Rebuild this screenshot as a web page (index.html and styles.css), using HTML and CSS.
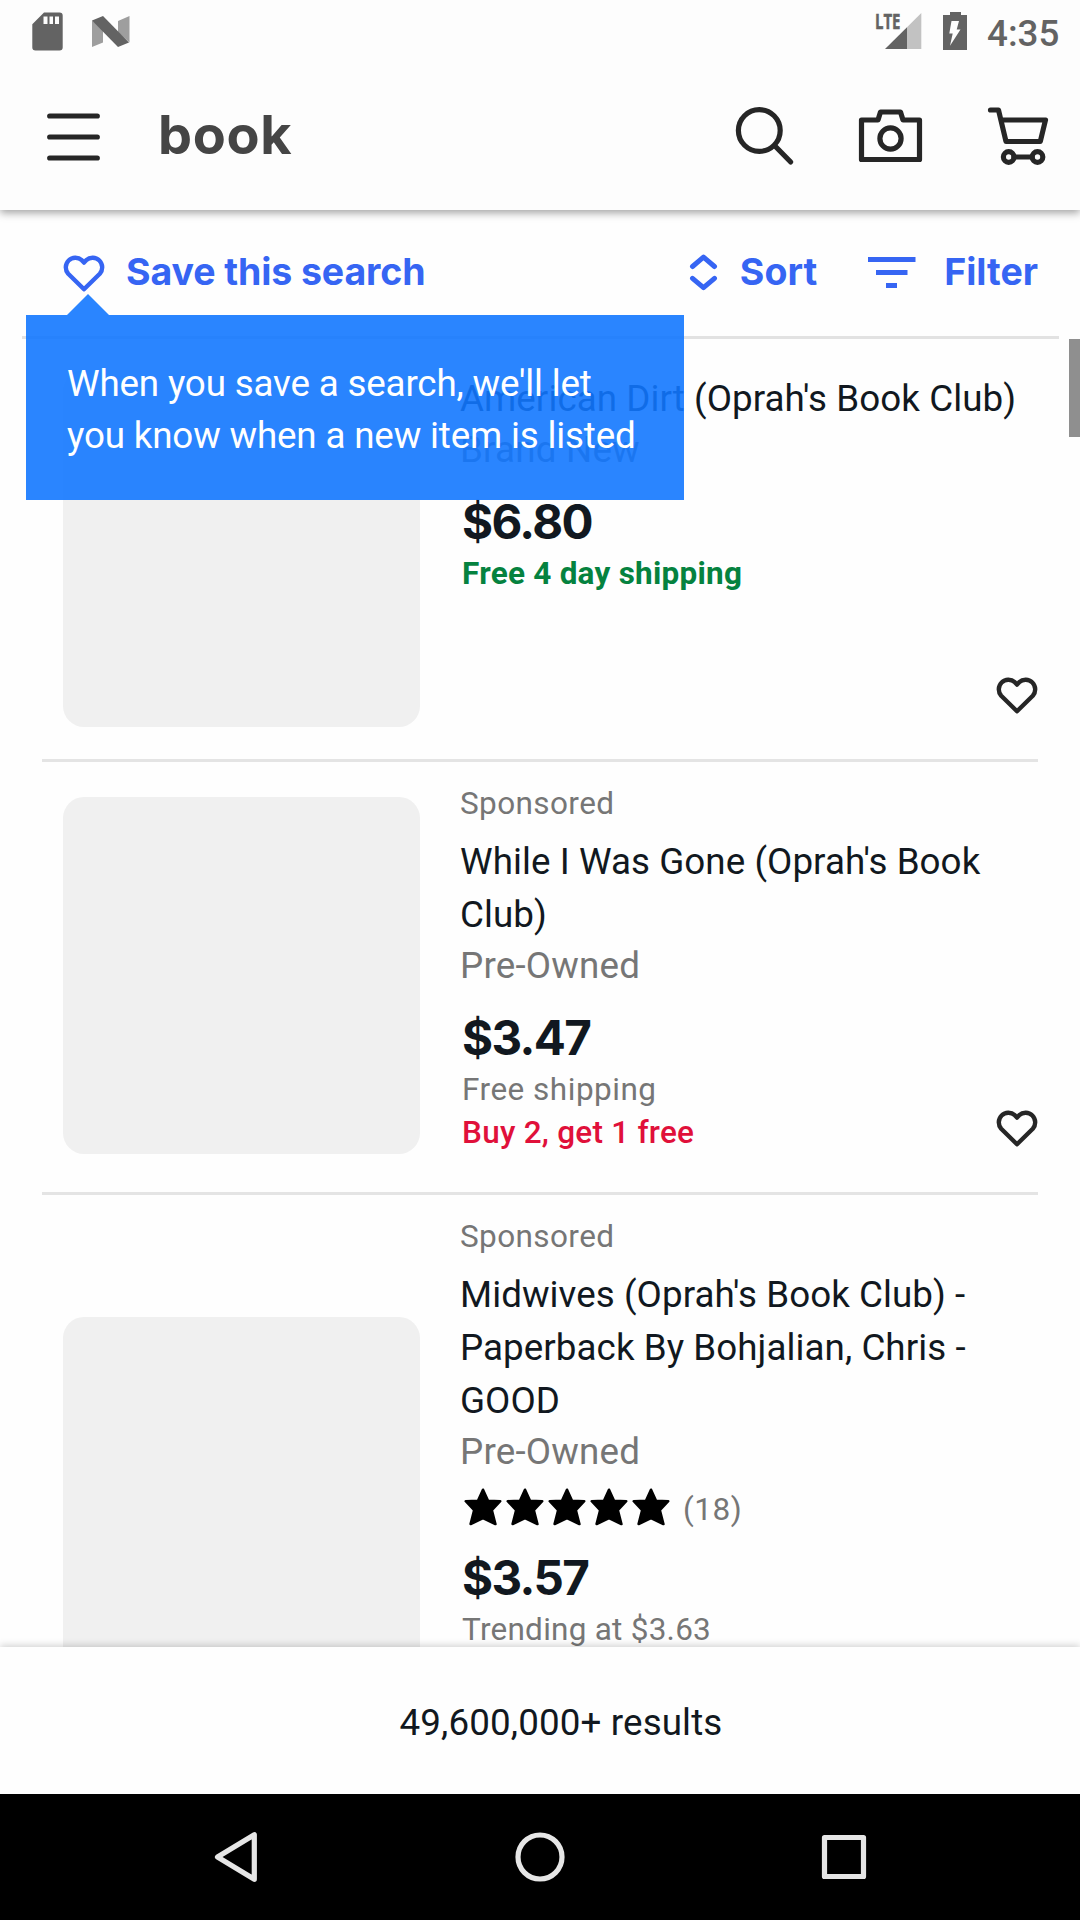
FILE: index.html
```
<!DOCTYPE html>
<html lang="en">
<head>
<meta charset="utf-8">
<title>book</title>
<link rel="stylesheet" href="styles.css">
</head>
<body>
<svg class="defs" aria-hidden="true">
  <symbol id="heart" viewBox="0 0 42 37"><path d="M21 34.300L5.200 18.700A9.600 9.600 0 0 1 18.800 5.200L21 7.600L23.200 5.200A9.600 9.600 0 0 1 36.800 18.700Z" fill="none" stroke="currentColor" stroke-width="4.400" stroke-linejoin="round"/></symbol>
  <symbol id="star" viewBox="0 0 38 38"><path d="M19 1.800L24 12.700L36.200 13.200L27.800 22.200L31.400 36L19 30L6.600 36L10.200 22.200L1.800 13.200L14 12.700Z" fill="#000" stroke="#000" stroke-width="2.600" stroke-linejoin="round"/></symbol>
</svg>
<div class="screen">
  <div class="status">
    <svg width="40" height="63" viewBox="28 0 40 63"><path fill="#636363" fill-rule="evenodd" d="M44 12.500H59.500Q62.700 12.500 62.700 15.500V47.500Q62.700 50.500 59.500 50.500H35.500Q32.300 50.500 32.300 47.500V24.300ZM43.500 16.500V24H47.500V16.500ZM49.500 16.500V24H53V16.500ZM55 16.500V24H59V16.500Z"/></svg>
    <svg class="nougat" width="46" height="63" viewBox="88 0 46 63"><path fill="#9e9e9e" d="M92 20.500L103 28V42.500L92 47ZM118 21L129.500 16V42.500L118 32Z"/><path fill="#636363" d="M92 20.500L103 16L129 42.500L118 47Z"/></svg>
    <span class="spacer"></span>
    <svg width="53" height="63" viewBox="872 0 53 63"><path fill="#c2c2c2" d="M921.300 13V49H907V27.300Z"/><path fill="#636363" d="M907 27.300V49H885Z"/><text x="875" y="28.800" class="lte" textLength="25.500" lengthAdjust="spacingAndGlyphs">LTE</text></svg>
    <svg class="battery" width="30" height="63" viewBox="940 0 30 63"><path fill="#636363" d="M950 12H961V15H967V50H943V15H950Z"/><path fill="#fdfdfd" d="M951.500 21H959L956.700 29.500H960.500L950 45.800L952.700 33.500H949.300Z"/></svg>
    <span class="time">4:35</span>
  </div>
  <header class="appbar">
    <svg width="60" height="100" viewBox="44 86.500 60 100"><path class="line" d="M49.700 115.500H97.300M49.700 136.500H97.300M49.700 157.500H97.300"/></svg>
    <h1 class="query">book</h1>
    <svg width="70" height="100" viewBox="730 86.500 70 100"><g class="line"><circle cx="759.300" cy="130" r="20.900"/><path d="M775 145.500L790.700 161.500"/></g></svg>
    <svg class="camera" width="72" height="100" viewBox="855 86.500 72 100"><g class="line"><path d="M861.500 119.500H878L880.500 111.500H900.500L903 119.500H919.500V159H861.500Z"/><circle cx="890.500" cy="138" r="10.600"/></g></svg>
    <svg class="cart" width="66" height="100" viewBox="985 86.500 66 100"><g class="line"><path d="M990.500 109.500H998.500L1006 141H1040.300L1045.500 119.500H1001"/><circle cx="1008.700" cy="156.500" r="5.300"/><circle cx="1037.500" cy="156.500" r="5.300"/><path d="M1014 156.500H1032"/></g></svg>
  </header>
  <div class="tools">
    <svg class="heart"><use href="#heart"/></svg>
    <span class="save">Save this search</span>
    <span class="spacer"></span>
    <svg width="32" height="60" viewBox="688 243 32 60"><path class="chev" d="M692.500 266.500L703.500 257.200L714.500 266.500M692.500 278.300L703.500 287.600L714.500 278.300"/></svg>
    <span class="sort">Sort</span>
    <svg class="bars" width="52" height="60" viewBox="866 243 52 60"><path fill="#3665f3" d="M868 257H915.500V262H868ZM876 270H907.500V275H876ZM886 283H897V288H886Z"/></svg>
    <span class="filter">Filter</span>
    <div class="tip">When you save a search, we'll let<br>you know when a new item is listed</div>
  </div>
  <main class="results">
    <article class="card first">
      <div class="photo"></div>
      <div class="info">
        <h2>American Dirt (Oprah's Book Club)</h2>
        <p class="condition">Brand New</p>
        <p class="price">$6.80</p>
        <p class="meta fast">Free 4 day shipping</p>
      </div>
      <svg class="heart"><use href="#heart"/></svg>
    </article>
    <article class="card second">
      <div class="photo"></div>
      <div class="info">
        <p class="sponsored">Sponsored</p>
        <h2>While I Was Gone (Oprah's Book<br>Club)</h2>
        <p class="condition">Pre-Owned</p>
        <p class="price">$3.47</p>
        <p class="meta ship">Free shipping</p>
        <p class="meta promo">Buy 2, get 1 free</p>
      </div>
      <svg class="heart"><use href="#heart"/></svg>
    </article>
    <article class="card third">
      <div class="photo"></div>
      <div class="info">
        <p class="sponsored">Sponsored</p>
        <h2>Midwives (Oprah's Book Club) -<br>Paperback By Bohjalian, Chris -<br>GOOD</h2>
        <p class="condition">Pre-Owned</p>
        <div class="rating"><svg><use href="#star"/></svg><svg><use href="#star"/></svg><svg><use href="#star"/></svg><svg><use href="#star"/></svg><svg><use href="#star"/></svg><span>(18)</span></div>
        <p class="price">$3.57</p>
        <p class="meta">Trending at $3.63</p>
      </div>
    </article>
    <div class="thumb"></div>
  </main>
  <footer class="count">49,600,000+ results</footer>
  <nav class="nav">
    <svg width="60" height="60" viewBox="206 1827 60 60"><path d="M217.500 1857L254.300 1834.700V1879.300Z"/></svg>
    <svg width="60" height="60" viewBox="510 1827 60 60"><circle cx="540" cy="1857" r="22"/></svg>
    <svg width="60" height="60" viewBox="814 1827 60 60"><rect x="824.500" y="1837.500" width="39" height="39"/></svg>
  </nav>
</div>
</body>
</html>
```
FILE: styles.css
```
* { box-sizing: border-box; margin: 0; padding: 0; }
body { background: #fefefe; font-family: Roboto, sans-serif; color: #111820; }
svg { display: block; flex: none; }
.defs { position: absolute; width: 0; height: 0; }
.screen { width: 1080px; height: 1920px; display: flex; flex-direction: column; overflow: hidden; }
.spacer { flex: 1; }

.status { flex: none; height: 63px; padding: 0 21px 0 28px; display: flex; align-items: center; position: relative; z-index: 2; background: #fdfdfd; }
.nougat { margin-left: 20px; }
.battery { margin-left: 15px; }
.lte { font: 700 21px "Open Sans", sans-serif; fill: #636363; stroke: #636363; stroke-width: .5px; }
.time { margin: 3px 0 0 17px; width: 72px; font-size: 36.75px; font-weight: 500; color: #636363; }

.appbar { flex: none; height: 147px; padding: 0 29px 0 44px; display: flex; align-items: center; background: #fdfdfd; box-shadow: 0 3px 8px rgba(0, 0, 0, .36); position: relative; z-index: 1; }
.line { fill: none; stroke: #262626; stroke-width: 5.2px; stroke-linecap: round; stroke-linejoin: round; }
.query { flex: 1; margin: -5px 0 0 54px; font: 700 54px "Inter", sans-serif; letter-spacing: .7px; color: #454545; }
.camera { margin-left: 55px; }
.cart { margin-left: 58px; }

.tools { flex: none; height: 126px; padding: 0 42px 0 63px; display: flex; align-items: center; position: relative; z-index: 1; color: #3665f3; font: 700 37.5px "Inter", sans-serif; }
.tools > span { margin-top: -3px; }
.heart { width: 42px; height: 37px; }
.save { margin-left: 21px; letter-spacing: -.1px; }
.sort { margin-left: 20px; }
.bars { margin-left: 49px; }
.filter { margin-left: 26px; }
.chev { fill: none; stroke: #3665f3; stroke-width: 5px; stroke-linecap: round; stroke-linejoin: round; }

.tip { position: absolute; left: 26px; top: 84px; width: 658px; height: 206px; padding: 64px 0 0 41px; font: 400 36.75px/52px Roboto, sans-serif; letter-spacing: -.17px; color: #fff; background: rgba(17, 118, 255, .895); clip-path: polygon(0 21px, 41px 21px, 62px 0, 83px 21px, 100% 21px, 100% 100%, 0 100%); white-space: nowrap; }

.results { flex: none; height: 1311px; overflow: hidden; position: relative; }
.results::before { content: ""; display: block; height: 3px; margin: 0 21px 0 22px; background: #e2e2e2; }
.card { display: flex; margin: 0 42px; padding-left: 21px; border-bottom: 3px solid #e4e4e4; }
.first { height: 423px; }
.second { height: 433px; }
.third { height: 600px; }
.photo { flex: none; width: 357px; height: 357px; border-radius: 21px; background: #f0f0f0; }
.first .photo { margin-top: 31px; }
.second .photo { margin-top: 35px; }
.third .photo { margin-top: 122px; }
.info { flex: 1; margin-left: 40px; padding-top: 23px; white-space: nowrap; }
.first .info { padding-top: 20px; }
.card .heart { align-self: flex-end; margin: 0 0 45px -42px; color: #262626; }
.sponsored { font-size: 31.5px; line-height: 38px; letter-spacing: .4px; color: #767676; }
h2 { margin-top: 12px; font-size: 36.75px; font-weight: 400; line-height: 53px; letter-spacing: .06px; }
.first h2 { margin-top: 13px; }
.condition { margin-top: 3px; font-size: 36.75px; line-height: 43px; letter-spacing: .2px; color: #767676; }
.price { margin: 22px 0 1px 2px; font: 700 47.5px/58px "Inter", sans-serif; letter-spacing: -1.6px; }
.meta { margin-left: 2px; font-size: 31.5px; line-height: 43px; letter-spacing: .25px; color: #767676; }
.ship { letter-spacing: .5px; }
.fast { font-weight: 700; color: #05823f; }
.promo { font-weight: 500; color: #e0103a; }
.rating { display: flex; align-items: center; gap: 4px; height: 42px; margin: 12px 0 0 4px; color: #767676; font-size: 31.5px; letter-spacing: .5px; }
.rating svg { width: 38px; height: 38px; margin-top: 2px; }
.rating span { margin: 6px 0 0 9px; }
.thumb { position: absolute; right: 0; top: 3px; width: 11px; height: 98px; background: #8f8f8f; }

.count { flex: none; height: 147px; padding: 4px 0 0 42px; display: flex; align-items: center; justify-content: center; font-size: 36.75px; letter-spacing: .13px; background: #fefefe; box-shadow: 0 -2px 7px rgba(0, 0, 0, .17); position: relative; }
.nav { flex: 1; padding: 0 206px; display: flex; align-items: center; justify-content: space-between; background: #000; position: relative; }
.nav svg { fill: none; stroke: #e6e6e6; stroke-width: 5.2px; stroke-linejoin: round; }
```
